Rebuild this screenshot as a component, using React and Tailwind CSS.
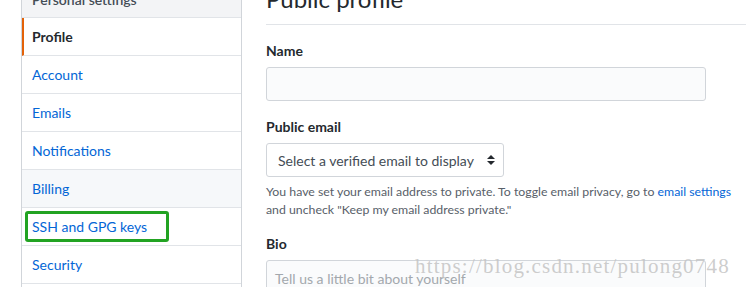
const navItems = [
    { label: "Profile", active: true },
    { label: "Account" },
    { label: "Emails" },
    { label: "Notifications" },
    { label: "Billing", shaded: true },
    { label: "SSH and GPG keys", marked: true },
    { label: "Security" },
    { label: "Blocked users" },
];

const SelectArrows = () => (
    <svg width="8" height="10" viewBox="0 0 8 10" className="shrink-0">
        <path d="M0 4 L4 0 L8 4 Z" fill="#24292e" />
        <path d="M0 6 L4 10 L8 6 Z" fill="#24292e" />
    </svg>
);

const Sidebar = () => {
    return (
        <nav className="ml-[21px] w-[221px] shrink-0 border-x border-[#d1d5da] -mt-[19px] self-start">
            <div className="h-[37px] px-[10px] flex items-center bg-[#f3f4f6] border-b border-[#e1e4e8] text-[14px] font-semibold text-[#444d56]">
                Personal settings
            </div>
            {navItems.map((item) => (
                <div
                    key={item.label}
                    className={`relative h-[38px] flex items-center border-b border-[#e1e4e8] text-[14px] ${
                        item.shaded ? "bg-[#f6f8fa]" : "bg-white"
                    } ${
                        item.active
                            ? "border-l-2 border-l-[#e36209] pl-[8px] font-bold text-[#24292e]"
                            : "pl-[10px] text-[#0366d6]"
                    }`}
                >
                    {item.label}
                    {item.marked && (
                        <div className="absolute left-[3px] top-[3px] w-[144px] h-[31px] border-[3px] border-[#22a322] rounded-[3px]" />
                    )}
                </div>
            ))}
        </nav>
    );
};

const ProfileForm = () => {
    return (
        <div className="flex-1 ml-[24px] min-w-0">
            <div className="-mt-[16px] pb-[10px] border-b border-[#e1e4e8] text-[24px] leading-[30px] text-[#24292e]">
                Public profile
            </div>

            <div className="mt-[16px] text-[14px] leading-[20px] font-bold text-[#24292e]">Name</div>
            <div className="mt-[6px] w-[440px] h-[34px] bg-[#fafbfc] border border-[#d1d5da] rounded-[3px]" />

            <div className="mt-[16px] text-[14px] leading-[20px] font-bold text-[#24292e]">Public email</div>
            <div className="mt-[6px] w-[238px] h-[34px] bg-white border border-[#d1d5da] rounded-[3px] flex items-center pl-[11px] pr-[8px] justify-between">
                <span className="text-[14px] text-[#444d56] whitespace-nowrap">Select a verified email to display</span>
                <SelectArrows />
            </div>
            <p className="mt-[6px] text-[12.3px] leading-[18px] text-[#586069] whitespace-nowrap">
                You have set your email address to private. To toggle email privacy, go to{" "}
                <span className="text-[#0366d6]">email settings</span>
                <br />
                and uncheck "Keep my email address private."
            </p>

            <div className="mt-[15px] text-[14px] leading-[20px] font-bold text-[#24292e]">Bio</div>
            <div className="mt-[6px] w-[440px] h-[100px] bg-[#fafbfc] border border-[#d1d5da] rounded-[3px] px-[8px] py-[7px] text-[14px] text-[#a3a8ad]">
                Tell us a little bit about yourself
            </div>
        </div>
    );
};

export default function App() {
    return (
        <div className="relative w-[746px] h-[287px] overflow-hidden bg-white flex font-['Lato','Liberation_Sans',sans-serif]">
            <Sidebar />
            <ProfileForm />
            <div className="absolute left-[415px] top-[256px] text-[21px] leading-[21px] tracking-[1.2px] font-['Liberation_Serif',serif] text-[#c4c4c4]/85 whitespace-nowrap pointer-events-none">
                https://blog.csdn.net/pulong0748
            </div>
        </div>
    );
}
